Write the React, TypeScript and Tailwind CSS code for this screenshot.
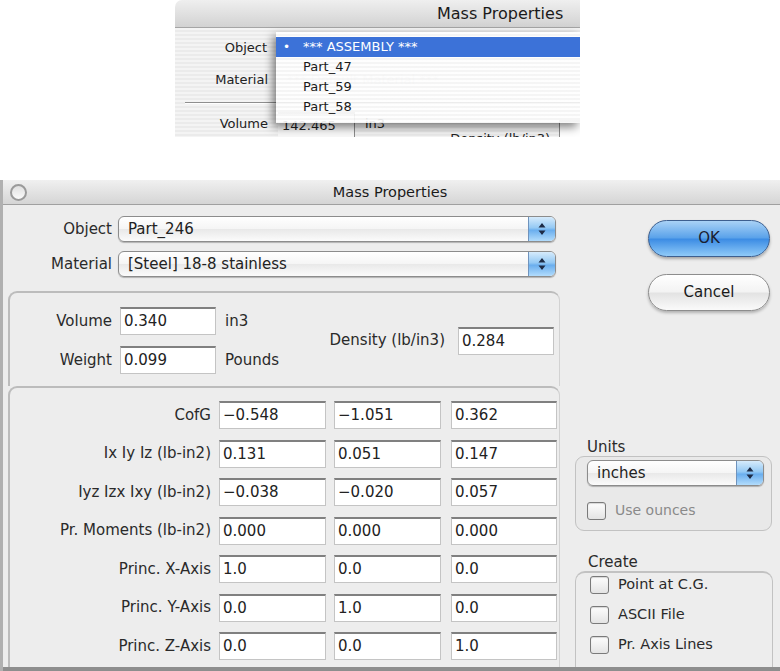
import React from "react";

type Row = [string, string, string, string];

const rows: Row[] = [
  ["CofG", "−0.548", "−1.051", "0.362"],
  ["Ix Iy Iz (lb-in2)", "0.131", "0.051", "0.147"],
  ["Iyz Izx Ixy (lb-in2)", "−0.038", "−0.020", "0.057"],
  ["Pr. Moments (lb-in2)", "0.000", "0.000", "0.000"],
  ["Princ. X-Axis", "1.0", "0.0", "0.0"],
  ["Princ. Y-Axis", "0.0", "1.0", "0.0"],
  ["Princ. Z-Axis", "0.0", "0.0", "1.0"],
];

const menuItems = ["*** ASSEMBLY ***", "Part_47", "Part_59", "Part_58"];

// blue aqua up/down arrows at the right end of a popup button
const Stepper = () => (
  <div className="flex w-[27px] items-center justify-center border-l border-[#6f93bd] bg-[linear-gradient(180deg,#d6ebfc_0%,#94c9f4_45%,#6aaeee_55%,#b2dcfc_100%)]">
    <svg width="8" height="14" viewBox="0 0 8 14">
      <path d="M4 1 L7.5 5.5 H0.5 Z M4 13 L7.5 8.5 H0.5 Z" fill="#1d2b46" />
    </svg>
  </div>
);

const Popup = ({ text, className = "" }: { text: string; className?: string }) => (
  <div
    className={`flex h-[26px] overflow-hidden rounded-[6px] border border-[#8c8c8c] bg-[linear-gradient(180deg,#ffffff,#f5f5f5_50%,#e9e9e9_52%,#fbfbfb)] shadow-[0_1px_1px_rgba(0,0,0,0.25)] ${className}`}
  >
    <span className="flex-1 pl-[9px] leading-[24px] text-[#222]">{text}</span>
    <Stepper />
  </div>
);

const Field = ({ value, className = "" }: { value: string; className?: string }) => (
  <div
    className={`h-[28px] border border-[#c4c4c4] border-t-[#808080] border-t-2 bg-white pl-[3px] leading-[24px] text-[#222] ${className}`}
  >
    {value}
  </div>
);

const Check = () => (
  <div className="h-[18px] w-[19px] shrink-0 rounded-[3px] border border-[#7a7a7a] bg-[linear-gradient(180deg,#fdfdfd,#e4e4e4)] shadow-[inset_0_1px_1px_rgba(0,0,0,0.15)]" />
);

const Snippet = () => (
  <div className="ml-[175px] h-[137px] w-[405px] overflow-hidden rounded-tl-[7px] text-[13px] text-[#222]">
    <div className="flex h-[28px] items-center border-b border-[#a5a5a5] bg-[linear-gradient(180deg,#efefef,#d2d2d2)] pl-[262px] text-[16px] text-[#1a1a1a]">
      Mass Properties
    </div>
    <div className="relative h-[109px] bg-[repeating-linear-gradient(180deg,#f4f4f4_0px,#f4f4f4_2px,#ebebeb_2px,#ebebeb_4px)]">
      <div className="pt-[11px]">
        <div className="flex h-[18px] items-center">
          <span className="w-[92px] text-right">Object</span>
        </div>
        <div className="mt-[14px] flex h-[18px] items-center">
          <span className="w-[93px] text-right">Material</span>
          <span className="ml-[19px] text-[#d4d4d4]">*** Default Material ***</span>
        </div>
        <div className="ml-[10px] mt-[13px] h-[2px] w-[395px] border-t border-[#8f8f8f] bg-white" />
        <div className="mt-[8px] flex items-start">
          <span className="mt-[2px] w-[93px] text-right">Volume</span>
          <div className="ml-[10px] h-[28px] w-[77px] border-t-2 border-r border-[#8a8a8a] bg-[#f8f8f8] pl-[4px] leading-[24px]">
            142.465
          </div>
          <span className="ml-[10px] mt-[2px]">in3</span>
          <span className="ml-[65px] mt-[17px]">Density (lb/in3)</span>
          <div className="ml-[9px] mt-[8px] h-[20px] flex-1 border-t-2 border-l border-[#8a8a8a] bg-white" />
        </div>
      </div>

      {/* popup menu, open over the dialog */}
      <div className="absolute left-[101px] right-0 top-[4px] h-[91px] bg-[repeating-linear-gradient(180deg,rgba(255,255,255,0.9)_0px,rgba(255,255,255,0.9)_2px,rgba(246,246,246,0.9)_2px,rgba(246,246,246,0.9)_4px)] pt-[5px] shadow-[-3px_4px_9px_rgba(0,0,0,0.5)]">
        {menuItems.map((item, i) => (
          <div
            key={item}
            className={`flex h-[20px] items-center ${i === 0 ? "bg-[#3c72d8] text-white" : "text-[#1a1a1a]"}`}
          >
            <span className="w-[27px] pl-[7px] text-[12px]">{i === 0 ? "•" : ""}</span>
            <span>{item}</span>
          </div>
        ))}
      </div>
    </div>
  </div>
);

const Dialog = () => (
  <div className="flex h-[491px] flex-col border-l-[3px] border-[#b0b0b0] bg-[#ededed] text-[15px] text-[#2a2a2a]">
    {/* title bar */}
    <div className="grid h-[25px] grid-cols-[1fr_auto_1fr] items-center border-b border-[#a0a0a0] bg-[linear-gradient(180deg,#f0f0f0,#d5d5d5)]">
      <div className="ml-[7px] h-[17px] w-[17px] rounded-full border-2 border-[#9a9a9a] bg-[linear-gradient(180deg,#e0e0e0,#fafafa)]" />
      <span className="-ml-[3px] mt-[2px] text-[14.5px] text-[#1a1a1a]">Mass Properties</span>
      <div />
    </div>

    <div className="flex flex-1">
      {/* left column: selectors and values */}
      <div className="flex w-[557px] flex-col">
        <div className="mt-[11px] flex items-center">
          <span className="w-[109px] text-right">Object</span>
          <Popup text="Part_246" className="ml-[6px] w-[438px]" />
        </div>
        <div className="mt-[9px] flex items-center">
          <span className="w-[109px] text-right">Material</span>
          <Popup text="[Steel] 18-8 stainless" className="ml-[6px] w-[438px]" />
        </div>

        <div className="ml-[5px] mt-[14px] flex items-center rounded-t-[9px] border-l-2 border-t-2 border-r border-[#bcbcbc] border-r-[#d2d2d2] pb-[12px] pt-[14px]">
          <div className="flex flex-col">
            <div className="flex items-center">
              <span className="w-[102px] text-right">Volume</span>
              <Field value="0.340" className="ml-[8px] w-[96px]" />
              <span className="ml-[9px]">in3</span>
            </div>
            <div className="mt-[11px] flex items-center">
              <span className="w-[102px] text-right">Weight</span>
              <Field value="0.099" className="ml-[8px] w-[96px]" />
              <span className="ml-[9px]">Pounds</span>
            </div>
          </div>
          <div className="ml-auto mr-[5px] flex items-center">
            <span>Density (lb/in3)</span>
            <Field value="0.284" className="ml-[13px] w-[96px]" />
          </div>
        </div>

        <div className="ml-[5px] flex flex-1 flex-col gap-[10.5px] rounded-t-[9px] border-l-2 border-t-2 border-r border-[#bcbcbc] border-r-[#d2d2d2] pt-[13px]">
          {rows.map(([label, a, b, c]) => (
            <div key={label} className="flex items-center">
              <span className="w-[201px] text-right">{label}</span>
              <Field value={a} className="ml-[8px] w-[107px]" />
              <Field value={b} className="ml-[8px] w-[107px]" />
              <Field value={c} className="ml-[10px] w-[106px]" />
            </div>
          ))}
        </div>
      </div>

      {/* right column: buttons, units, create */}
      <div className="flex flex-1 flex-col">
        <div className="ml-[88px] mt-[15px] flex h-[37px] w-[122px] items-center justify-center rounded-full border border-[#3d5f8f] bg-[linear-gradient(180deg,#a9d2f6_0%,#5aa2ea_48%,#3c8ce4_52%,#8fcaf8_100%)] text-[#1a2030] shadow-[0_2px_3px_rgba(0,0,0,0.3)]">
          OK
        </div>
        <div className="ml-[88px] mt-[17px] flex h-[37px] w-[122px] items-center justify-center rounded-full border border-[#8d8d8d] bg-[linear-gradient(180deg,#ffffff_0%,#f3f3f3_48%,#e3e3e3_52%,#fafafa_100%)] text-[#1a1a1a] shadow-[0_2px_3px_rgba(0,0,0,0.25)]">
          Cancel
        </div>

        <span className="ml-[27px] mt-[127px] leading-[18px]">Units</span>
        <div className="ml-[15px] h-[75px] w-[197px] rounded-[9px] border border-[#c2c2c2] bg-[#e9e9e9] pl-[11px] pt-[3px]">
          <Popup text="inches" className="w-[177px]" />
          <div className="mt-[14px] flex items-center">
            <Check />
            <span className="ml-[9px] text-[14px] text-[#8a8a8a]">Use ounces</span>
          </div>
        </div>

        <span className="ml-[28px] mt-[22px] leading-[18px]">Create</span>
        <div className="ml-[15px] flex w-[198px] flex-1 flex-col gap-[12px] rounded-t-[10px] border-l border-t-2 border-r border-[#c2c2c2] pl-[14px] pt-[3px]">
          {["Point at C.G.", "ASCII File", "Pr. Axis Lines"].map((t) => (
            <div key={t} className="flex h-[18px] items-center">
              <Check />
              <span className="ml-[9px] text-[14.5px]">{t}</span>
            </div>
          ))}
        </div>
      </div>
    </div>

    <div className="h-[4px] bg-[#8e8e8e]" />
  </div>
);

export default function App() {
  return (
    <div className="h-[671px] w-[780px] overflow-hidden bg-white font-['DejaVu_Sans',sans-serif]">
      <Snippet />
      <div className="h-[43px]" />
      <Dialog />
    </div>
  );
}
